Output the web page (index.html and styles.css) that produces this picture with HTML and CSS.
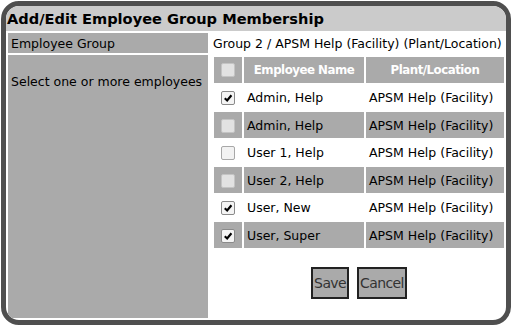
FILE: index.html
```html
<!DOCTYPE html>
<html lang="en">
<head>
    <meta charset="UTF-8">
    <title>Add/Edit Employee Group Membership</title>
    <link rel="stylesheet" href="styles.css">
</head>
<body>
    <div class="dialog">
        <div class="title">Add/Edit Employee Group Membership</div>
        <table class="form">
            <tr>
                <th class="label">Employee Group</th>
                <td class="value">Group 2 / APSM Help (Facility) (Plant/Location)</td>
            </tr>
            <tr>
                <th class="label tall">Select one or more employees</th>
                <td class="value list-cell">
                    <table class="list">
                        <tr class="head">
                            <th class="check-col"><span class="box"></span></th>
                            <th class="name-col">Employee Name</th>
                            <th class="plant-col">Plant/Location</th>
                        </tr>
                        <tr>
                            <td class="check-col"><span class="box checked"><svg viewBox="0 0 13 13"><path d="M3 6.8 L5.6 9.2 L10.2 3.6"/></svg></span></td>
                            <td>Admin, Help</td>
                            <td>APSM Help (Facility)</td>
                        </tr>
                        <tr class="alt">
                            <td class="check-col"><span class="box"></span></td>
                            <td>Admin, Help</td>
                            <td>APSM Help (Facility)</td>
                        </tr>
                        <tr>
                            <td class="check-col"><span class="box"></span></td>
                            <td>User 1, Help</td>
                            <td>APSM Help (Facility)</td>
                        </tr>
                        <tr class="alt">
                            <td class="check-col"><span class="box"></span></td>
                            <td>User 2, Help</td>
                            <td>APSM Help (Facility)</td>
                        </tr>
                        <tr>
                            <td class="check-col"><span class="box checked"><svg viewBox="0 0 13 13"><path d="M3 6.8 L5.6 9.2 L10.2 3.6"/></svg></span></td>
                            <td>User, New</td>
                            <td>APSM Help (Facility)</td>
                        </tr>
                        <tr class="alt">
                            <td class="check-col"><span class="box checked"><svg viewBox="0 0 13 13"><path d="M3 6.8 L5.6 9.2 L10.2 3.6"/></svg></span></td>
                            <td>User, Super</td>
                            <td>APSM Help (Facility)</td>
                        </tr>
                    </table>
                    <div class="actions">
                        <button class="button">Save</button>
                        <button class="button">Cancel</button>
                    </div>
                </td>
            </tr>
        </table>
    </div>
</body>
</html>
```

FILE: styles.css
```css
body {
    margin: 0;
    font-family: "DejaVu Sans", Verdana, sans-serif;
    font-size: 12.5px;
    color: #000;
    background-color: #fff;
}
.dialog {
    margin: 1px;
    height: 324px;
    box-sizing: border-box;
    border: 5px solid #4f4f4f;
    border-radius: 18px;
    overflow: hidden;
    display: flex;
    flex-direction: column;
    background-color: #fff;
}
.title {
    height: 25px;
    line-height: 25px;
    padding-left: 1px;
    background-color: #cbcbcb;
    font-size: 14.6px;
    font-weight: bold;
    white-space: nowrap;
}
.form {
    flex: 1;
    width: 100%;
    border-spacing: 2px;
    border-collapse: separate;
    table-layout: fixed;
}
.form th,
.form td {
    padding: 0;
}
.label {
    width: 197px;
    padding: 0 0 0 3px !important;
    background-color: #aaa;
    font-weight: normal;
    text-align: left;
    height: 19px;
    white-space: nowrap;
}
.label.tall {
    vertical-align: top;
    padding-top: 19px !important;
}
.value {
    padding-left: 3px !important;
    white-space: nowrap;
    vertical-align: middle;
}
.list-cell {
    vertical-align: top !important;
    padding: 0 0 0 2px !important;
}
.list {
    width: 294px;
    border-spacing: 2px;
    border-collapse: separate;
}
.list th,
.list td {
    height: 25.5px;
    padding: 0 3px;
    white-space: nowrap;
}
.head th {
    background-color: #aaa;
    color: #fff;
    font-size: 11.8px;
    font-weight: bold;
    letter-spacing: -0.5px;
    text-align: center;
}
.alt td {
    background-color: #aaa;
}
.check-col {
    width: 22px;
    text-align: center;
}
.name-col {
    width: 114px;
}
.box {
    display: inline-block;
    width: 12px;
    height: 12px;
    border: 1px solid #c4c4c4;
    border-radius: 2px;
    background-color: #e2e2e2;
    vertical-align: middle;
}
.list tr:not(.alt):not(.head) .box {
    background-color: #f2f2f2;
    border-color: #a8a8a8;
}
.box.checked {
    background-color: #f4f4f4 !important;
    border-color: #8a8a8a !important;
}
.box svg {
    display: block;
    width: 12px;
    height: 12px;
}
.box path {
    fill: none;
    stroke: #000;
    stroke-width: 2.4;
}
.actions {
    display: flex;
    justify-content: center;
    gap: 8px;
    margin-top: 17px;
    padding-left: 2px;
}
.button {
    height: 32px;
    padding: 0 1px;
    font-family: "DejaVu Sans", Verdana, sans-serif;
    font-size: 14px;
    letter-spacing: -0.6px;
    color: #333;
    background-color: #aaa;
    border: 2px solid #222;
    border-radius: 0;
}
```
